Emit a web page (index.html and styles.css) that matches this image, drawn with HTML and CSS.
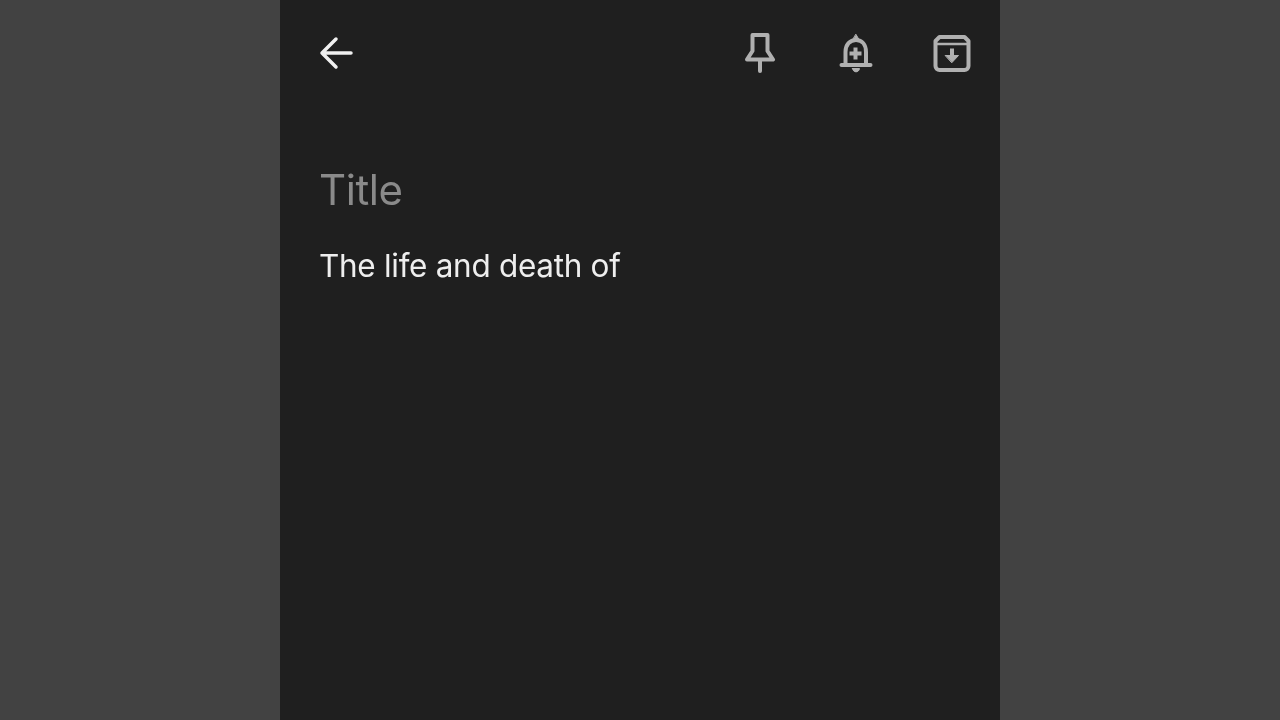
FILE: index.html
```html
<!DOCTYPE html>
<html>
<head>
<meta charset="utf-8">
<title>Note</title>
<link rel="stylesheet" href="styles.css">
</head>
<body>
<div class="phone">
    <div class="toolbar">
        <svg class="icon back" width="48" height="48" viewBox="0 0 48 48"><path d="M39 24H10M24 10 10 24 24 38" /></svg>
        <div class="actions">
            <svg class="icon" width="48" height="48" viewBox="0 0 48 48"><path d="M16.500 6H31.500V22L37 30.500H11L16.500 22Z" /><path d="M24 31V42" /></svg>
            <svg class="icon" width="48" height="48" viewBox="0 0 48 48"><path d="M13.500 35.500V23C13.500 15.500 18 11 24 11S34 15.500 34 23V35.500" /><path d="M9.500 36H38.500" /><path class="plus" d="M23.500 18.500V30.500M17.500 24.500H29.500" /><path class="solid" d="M24 5.500 27 10.500H21ZM20.500 39.500H27.500C27 44 21 44 20.500 39.500Z" /></svg>
            <svg class="icon" width="48" height="48" viewBox="0 0 48 48"><path d="M11.500 8H36.500L40.500 12V37A4 4 0 0 1 36.500 41H11.500A4 4 0 0 1 7.500 37V12Z" /><path class="thin" d="M9 15H39" /><path class="plus" d="M24 19.500V29" /><path class="solid" d="M17.500 26.500H30.500L24 33.500Z" /></svg>
        </div>
    </div>
    <div class="note">
        <div class="title">Title</div>
        <div class="body-text">The life and death of</div>
    </div>
</div>
</body>
</html>
```

FILE: styles.css
```css
html, body {
  margin: 0;
  height: 100%;
}

body {
  background-color: #424242;
  display: flex;
  justify-content: center;
  overflow: hidden;
  font-family: Inter, "Noto Sans", sans-serif;
}

.phone {
  width: 720px;
  height: 720px;
  background-color: #1f1f1f;
}

.toolbar {
  display: flex;
  justify-content: space-between;
  align-items: center;
  padding: 29px 24px 0 32px;
}

.actions {
  display: flex;
  gap: 48px;
}

.icon {
  display: block;
  fill: none;
  stroke: #b0b0b0;
  stroke-width: 4;
  stroke-linecap: round;
  stroke-linejoin: round;
}

.icon .solid {
  fill: #b0b0b0;
  stroke-width: 1;
}

.icon .plus {
  stroke-width: 4;
  stroke-linecap: butt;
}

.icon .thin {
  stroke-width: 2.5;
}

.back {
  stroke: #f0f0f0;
  stroke-width: 3.5;
}

.note {
  padding: 85px 40px 0;
  will-change: transform;
}

.title {
  font-size: 42px;
  line-height: 56px;
  font-weight: 400;
  letter-spacing: -0.4px;
  color: #8a8a8a;
  margin-left: -1px;
}

.body-text {
  margin-top: 26px;
  font-size: 31.5px;
  line-height: 44px;
  font-weight: 400;
  letter-spacing: -0.3px;
  color: #eeeeee;
  margin-left: -1px;
}
```
